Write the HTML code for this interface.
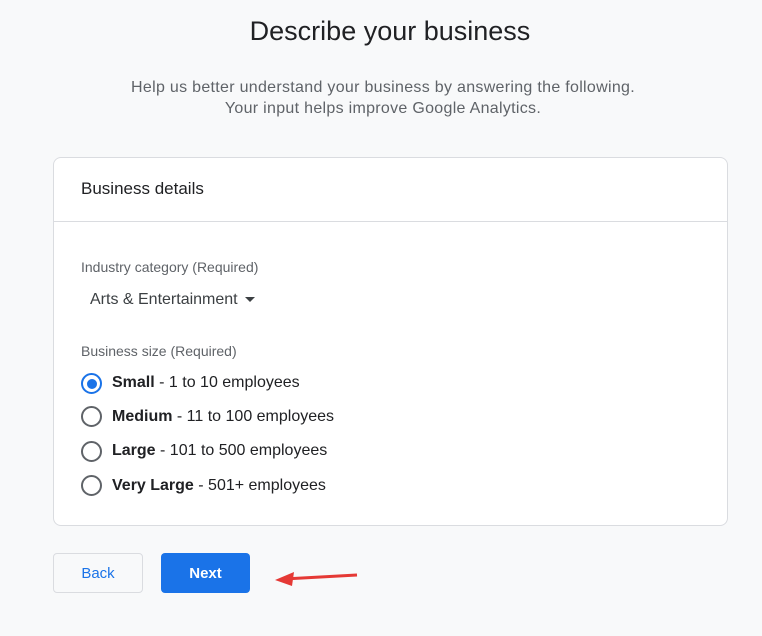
<!DOCTYPE html><html><head><style>
body{margin:0;width:762px;height:636px;background:#f8f9fa;font-family:"Liberation Sans",sans-serif;position:relative;overflow:hidden;color:#202124}
.a{position:absolute;white-space:nowrap}
.card{position:absolute;left:53px;top:157px;width:673px;height:367px;background:#fff;border:1px solid #dadce0;border-radius:8px}
.r{position:absolute;left:81px;width:18px;height:18px;border:2px solid #5f6368;border-radius:50%;box-sizing:border-box}
.t{position:absolute;left:112px;font-size:16px;line-height:20px;color:#202124}
b{font-weight:bold}
</style></head><body>
<div class="a" style="left:0;width:780px;text-align:center;top:15px;font-size:27px;line-height:32px">Describe your business</div>
<div class="a" style="left:0;width:766px;text-align:center;top:77px;font-size:16px;letter-spacing:0.3px;line-height:21px;color:#5f6368">Help us better understand your business by answering the following.<br>Your input helps improve Google Analytics.</div>
<div class="card"></div>
<div class="a" style="left:81px;top:179px;font-size:17px;line-height:20px">Business details</div>
<div class="a" style="left:54px;top:221px;width:673px;height:1px;background:#dadce0"></div>
<div class="a" style="left:81px;top:259px;font-size:14px;line-height:17px;color:#5f6368">Industry category (Required)</div>
<div class="a" style="left:90px;top:290px;font-size:16px;line-height:20px;color:#3c4043">Arts &amp; Entertainment <span style="display:inline-block;width:0;height:0;border-left:5px solid transparent;border-right:5px solid transparent;border-top:5px solid #3c4043;vertical-align:middle;margin-left:3px"></span></div>
<div class="a" style="left:81px;top:343px;font-size:14px;line-height:17px;color:#5f6368">Business size (Required)</div>
<div class="r" style="left:81px;top:373px;width:21px;height:21px;border-color:#1a73e8"><div style="position:absolute;left:3.5px;top:3.5px;width:10px;height:10px;border-radius:50%;background:#1a73e8"></div></div>
<div class="r" style="top:406px;width:21px;height:21px"></div>
<div class="r" style="top:441px;width:21px;height:21px"></div>
<div class="r" style="top:475px;width:21px;height:21px"></div>
<div class="t" style="top:373px"><b>Small</b> - 1 to 10 employees</div>
<div class="t" style="top:407px"><b>Medium</b> - 11 to 100 employees</div>
<div class="t" style="top:441px"><b>Large</b> - 101 to 500 employees</div>
<div class="t" style="top:476px"><b>Very Large</b> - 501+ employees</div>
<div class="a" style="left:53px;top:553px;width:88px;height:38px;border:1px solid #dadce0;border-radius:4px;background:#f8f9fa;color:#1a73e8;font-size:15px;line-height:40px;text-align:center">Back</div>
<div class="a" style="left:161px;top:553px;width:89px;height:40px;border-radius:4px;background:#1a73e8;color:#fff;font-size:15px;font-weight:bold;line-height:42px;text-align:center">Next</div>
<svg class="a" style="left:270px;top:566px" width="95" height="24"><line x1="87" y1="9" x2="14" y2="13" stroke="#e53935" stroke-width="3"/><polygon points="5,14 24,6 22,20" fill="#e53935"/></svg>
</body></html>
